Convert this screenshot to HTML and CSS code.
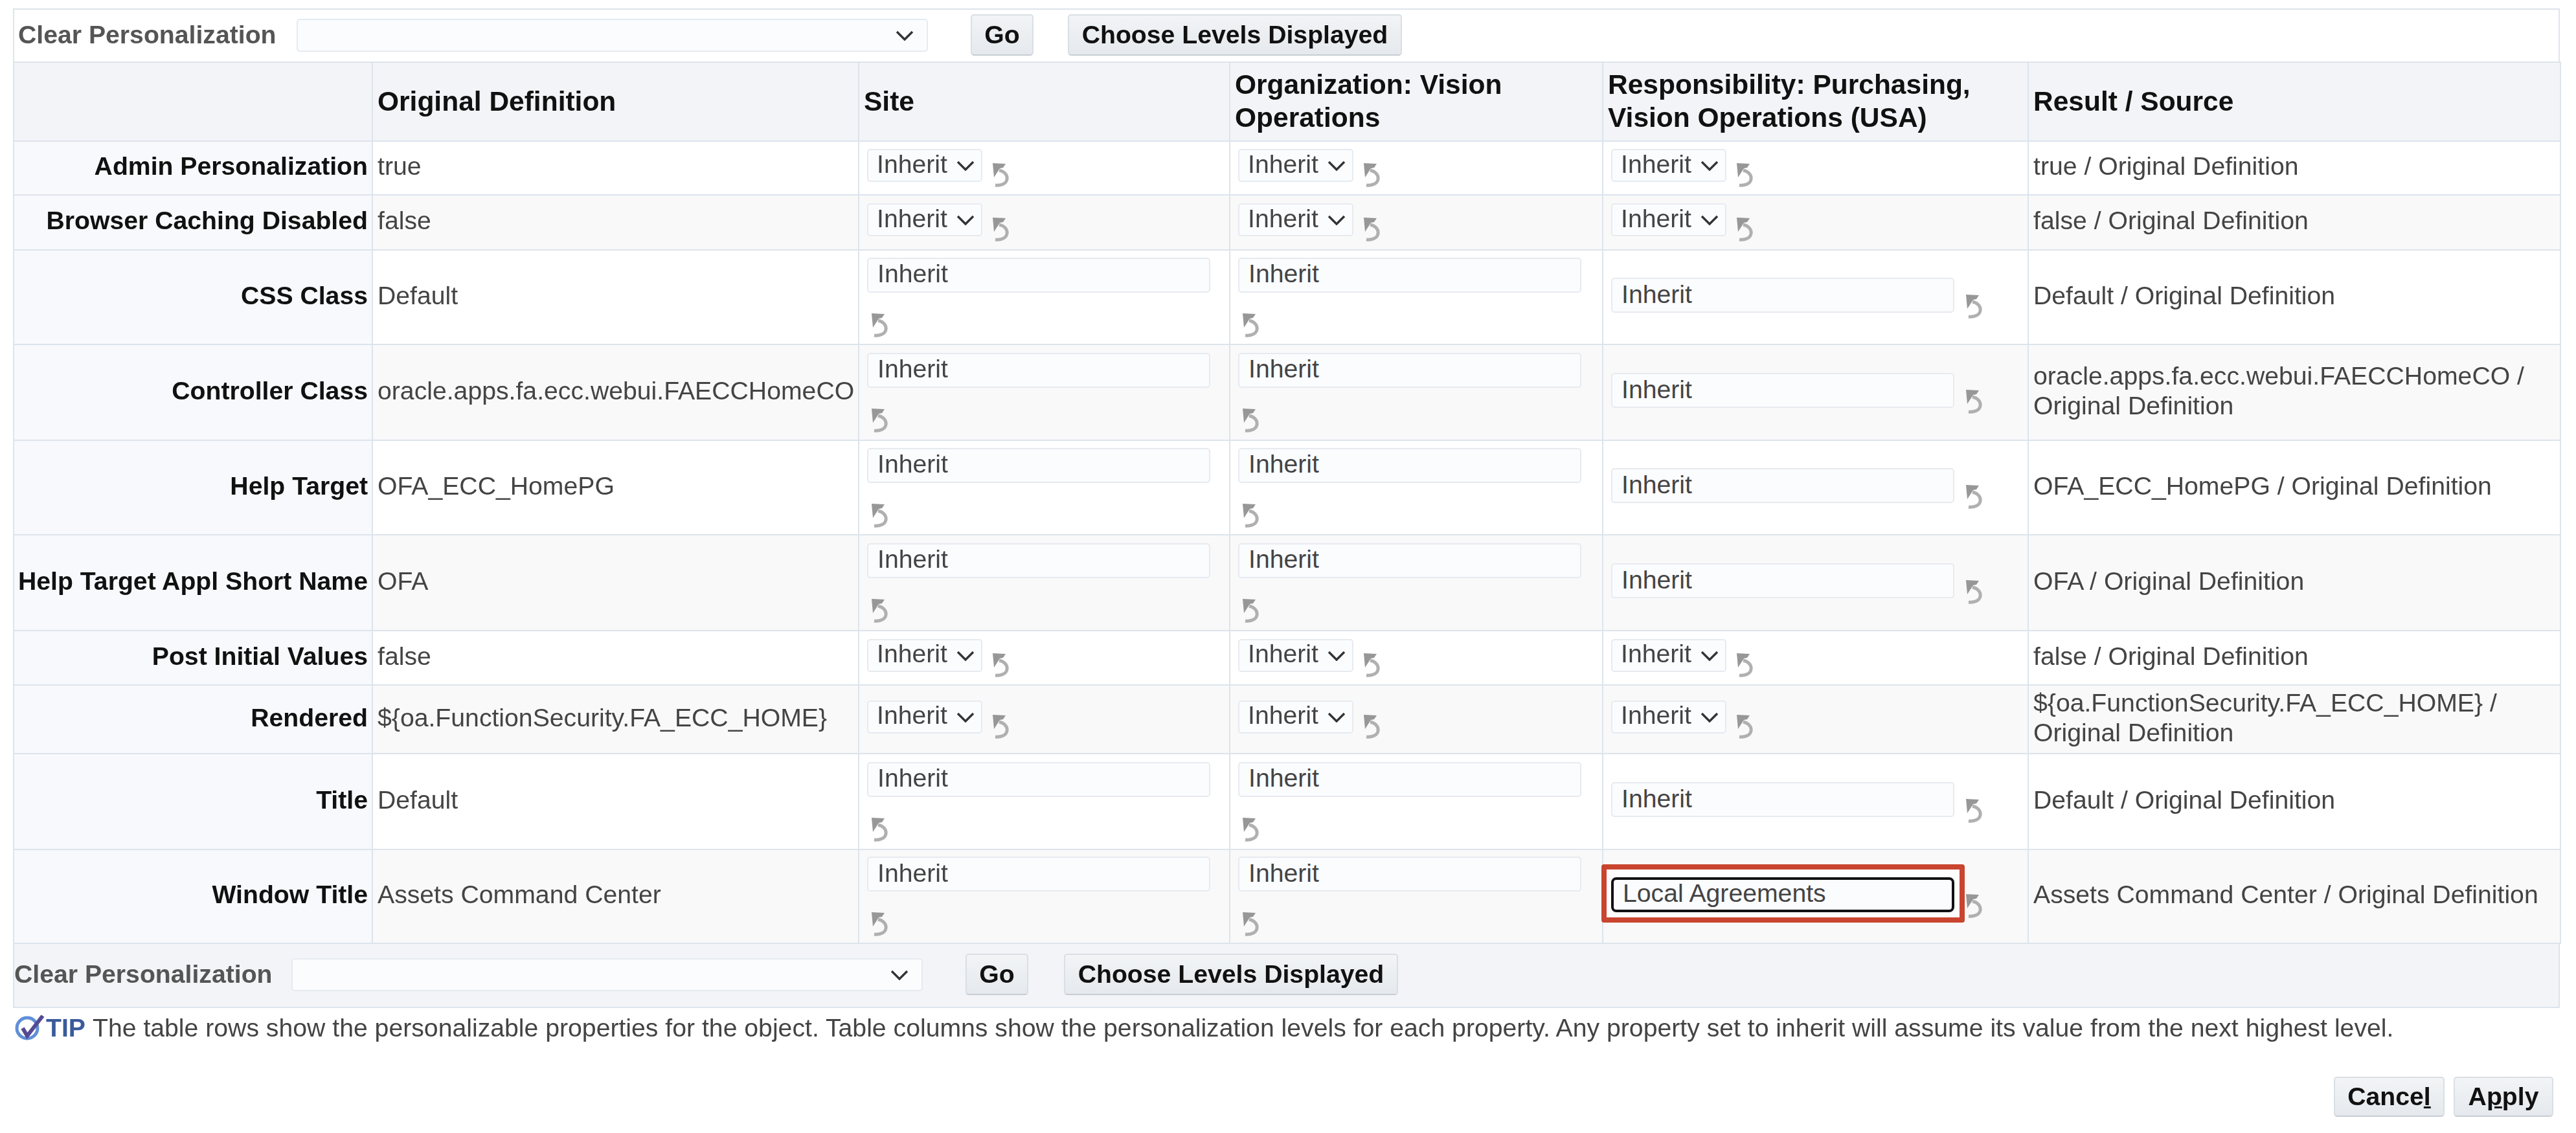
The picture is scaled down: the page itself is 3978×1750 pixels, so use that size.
FILE: index.html
```html
<!DOCTYPE html>
<html lang="en">
<head>
<meta charset="utf-8">
<title>Personalize Page</title>
<link rel="stylesheet" href="styles.css">
</head>
<body>
<svg class="defs" width="0" height="0" aria-hidden="true">
  <symbol id="undo" viewBox="0 0 25 38">
    <polygon points="0,1 20,2 16,8 11,9 2,23" fill="#979797"/>
    <path d="M10 12 C18 14 23 19 22 26 C21 33 12 36 4 35" fill="none" stroke="#b0b0b0" stroke-width="5"/>
  </symbol>
  <symbol id="chev" viewBox="0 0 28 16">
    <path d="M2 2 L14 14 L26 2" fill="none" stroke="#333" stroke-width="3.4"/>
  </symbol>
</svg>
<main class="page">
  <div class="toolbar toolbar-top">
    <span class="clear-label">Clear Personalization</span>
    <div class="select select-wide"><svg class="chev"><use href="#chev"/></svg></div>
    <button class="btn btn-go">Go</button>
    <button class="btn btn-choose">Choose Levels Displayed</button>
  </div>
  <table class="grid">
    <colgroup>
      <col class="c-label"><col class="c-orig"><col class="c-site"><col class="c-org"><col class="c-resp"><col class="c-result">
    </colgroup>
    <thead>
      <tr class="h-head">
        <th></th>
        <th>Original Definition</th>
        <th>Site</th>
        <th>Organization: Vision Operations</th>
        <th>Responsibility: Purchasing, Vision Operations (USA)</th>
        <th>Result / Source</th>
      </tr>
    </thead>
    <tbody>
      <tr class="h83">
        <td class="label">Admin Personalization</td><td>true</td>
        <td class="ctl"><div class="pick"><div class="select select-small">Inherit<svg class="chev"><use href="#chev"/></svg></div><svg class="undo"><use href="#undo"/></svg></div></td>
        <td class="ctl"><div class="pick"><div class="select select-small">Inherit<svg class="chev"><use href="#chev"/></svg></div><svg class="undo"><use href="#undo"/></svg></div></td>
        <td class="ctl"><div class="pick"><div class="select select-small">Inherit<svg class="chev"><use href="#chev"/></svg></div><svg class="undo"><use href="#undo"/></svg></div></td>
        <td>true / Original Definition</td>
      </tr>
      <tr class="h85 alt">
        <td class="label">Browser Caching Disabled</td><td>false</td>
        <td class="ctl"><div class="pick"><div class="select select-small">Inherit<svg class="chev"><use href="#chev"/></svg></div><svg class="undo"><use href="#undo"/></svg></div></td>
        <td class="ctl"><div class="pick"><div class="select select-small">Inherit<svg class="chev"><use href="#chev"/></svg></div><svg class="undo"><use href="#undo"/></svg></div></td>
        <td class="ctl"><div class="pick"><div class="select select-small">Inherit<svg class="chev"><use href="#chev"/></svg></div><svg class="undo"><use href="#undo"/></svg></div></td>
        <td>false / Original Definition</td>
      </tr>
      <tr class="h146">
        <td class="label">CSS Class</td><td>Default</td>
        <td class="ctl"><div class="stack"><div class="field">Inherit</div><svg class="undo"><use href="#undo"/></svg></div></td>
        <td class="ctl"><div class="stack"><div class="field">Inherit</div><svg class="undo"><use href="#undo"/></svg></div></td>
        <td class="ctl"><div class="inline"><div class="field">Inherit</div><svg class="undo"><use href="#undo"/></svg></div></td>
        <td>Default / Original Definition</td>
      </tr>
      <tr class="h148 alt">
        <td class="label">Controller Class</td><td>oracle.apps.fa.ecc.webui.FAECCHomeCO</td>
        <td class="ctl"><div class="stack"><div class="field">Inherit</div><svg class="undo"><use href="#undo"/></svg></div></td>
        <td class="ctl"><div class="stack"><div class="field">Inherit</div><svg class="undo"><use href="#undo"/></svg></div></td>
        <td class="ctl"><div class="inline"><div class="field">Inherit</div><svg class="undo"><use href="#undo"/></svg></div></td>
        <td>oracle.apps.fa.ecc.webui.FAECCHomeCO / Original Definition</td>
      </tr>
      <tr class="h146">
        <td class="label">Help Target</td><td>OFA_ECC_HomePG</td>
        <td class="ctl"><div class="stack"><div class="field">Inherit</div><svg class="undo"><use href="#undo"/></svg></div></td>
        <td class="ctl"><div class="stack"><div class="field">Inherit</div><svg class="undo"><use href="#undo"/></svg></div></td>
        <td class="ctl"><div class="inline"><div class="field">Inherit</div><svg class="undo"><use href="#undo"/></svg></div></td>
        <td>OFA_ECC_HomePG / Original Definition</td>
      </tr>
      <tr class="h148 alt">
        <td class="label">Help Target Appl Short Name</td><td>OFA</td>
        <td class="ctl"><div class="stack"><div class="field">Inherit</div><svg class="undo"><use href="#undo"/></svg></div></td>
        <td class="ctl"><div class="stack"><div class="field">Inherit</div><svg class="undo"><use href="#undo"/></svg></div></td>
        <td class="ctl"><div class="inline"><div class="field">Inherit</div><svg class="undo"><use href="#undo"/></svg></div></td>
        <td>OFA / Original Definition</td>
      </tr>
      <tr class="h84">
        <td class="label">Post Initial Values</td><td>false</td>
        <td class="ctl"><div class="pick"><div class="select select-small">Inherit<svg class="chev"><use href="#chev"/></svg></div><svg class="undo"><use href="#undo"/></svg></div></td>
        <td class="ctl"><div class="pick"><div class="select select-small">Inherit<svg class="chev"><use href="#chev"/></svg></div><svg class="undo"><use href="#undo"/></svg></div></td>
        <td class="ctl"><div class="pick"><div class="select select-small">Inherit<svg class="chev"><use href="#chev"/></svg></div><svg class="undo"><use href="#undo"/></svg></div></td>
        <td>false / Original Definition</td>
      </tr>
      <tr class="h106 alt">
        <td class="label">Rendered</td><td>${oa.FunctionSecurity.FA_ECC_HOME}</td>
        <td class="ctl"><div class="pick"><div class="select select-small">Inherit<svg class="chev"><use href="#chev"/></svg></div><svg class="undo"><use href="#undo"/></svg></div></td>
        <td class="ctl"><div class="pick"><div class="select select-small">Inherit<svg class="chev"><use href="#chev"/></svg></div><svg class="undo"><use href="#undo"/></svg></div></td>
        <td class="ctl"><div class="pick"><div class="select select-small">Inherit<svg class="chev"><use href="#chev"/></svg></div><svg class="undo"><use href="#undo"/></svg></div></td>
        <td>${oa.FunctionSecurity.FA_ECC_HOME} / Original Definition</td>
      </tr>
      <tr class="h148">
        <td class="label">Title</td><td>Default</td>
        <td class="ctl"><div class="stack"><div class="field">Inherit</div><svg class="undo"><use href="#undo"/></svg></div></td>
        <td class="ctl"><div class="stack"><div class="field">Inherit</div><svg class="undo"><use href="#undo"/></svg></div></td>
        <td class="ctl"><div class="inline"><div class="field">Inherit</div><svg class="undo"><use href="#undo"/></svg></div></td>
        <td>Default / Original Definition</td>
      </tr>
      <tr class="h145 alt">
        <td class="label">Window Title</td><td>Assets Command Center</td>
        <td class="ctl"><div class="stack"><div class="field">Inherit</div><svg class="undo"><use href="#undo"/></svg></div></td>
        <td class="ctl"><div class="stack"><div class="field">Inherit</div><svg class="undo"><use href="#undo"/></svg></div></td>
        <td class="ctl"><div class="inline"><div class="callout-wrap"><span class="callout"></span><div class="field field-focus">Local Agreements</div></div><svg class="undo"><use href="#undo"/></svg></div></td>
        <td>Assets Command Center / Original Definition</td>
      </tr>
    </tbody>
  </table>
  <div class="toolbar toolbar-bottom">
    <span class="clear-label">Clear Personalization</span>
    <div class="select select-wide"><svg class="chev"><use href="#chev"/></svg></div>
    <button class="btn btn-go">Go</button>
    <button class="btn btn-choose">Choose Levels Displayed</button>
  </div>
  <p class="tip">
    <svg class="tip-icon" viewBox="0 0 46 40" aria-hidden="true">
      <circle cx="19" cy="20" r="16" fill="none" stroke="#5f8fd8" stroke-width="5"/>
      <path d="M12 20 L19 32 L43 1" fill="none" stroke="#544a93" stroke-width="6"/>
    </svg>
    <b class="tip-word">TIP</b>
    <span>The table rows show the personalizable properties for the object. Table columns show the personalization levels for each property. Any property set to inherit will assume its value from the next highest level.</span>
  </p>
  <div class="actions">
    <button class="btn btn-cancel">Cance<u>l</u></button>
    <button class="btn btn-apply">A<u>p</u>ply</button>
  </div>
</main>
</body>
</html>
```
FILE: styles.css
```css
* { box-sizing: border-box; }
html, body { margin: 0; background: #fff; }
body {
  font-family: "Liberation Sans", Arial, sans-serif;
  font-size: 39.2px;
  line-height: 46px;
  color: #444;
}
.defs { position: absolute; }
.page { width: 3933px; margin-left: 20px; padding-top: 13px; filter: blur(0.7px); }

.toolbar { display: flex; align-items: center; }
.toolbar-top {
  height: 82px;
  padding-left: 6px;
  padding-bottom: 2px;
  border: 2px solid #dde4ec;
  border-bottom: 0;
}
.toolbar-bottom {
  height: 99px;
  padding-left: 0;
  padding-bottom: 3px;
  background: #f2f4f7;
  border: 2px solid #dde4ec;
  border-top: 0;
}
.clear-label { font-weight: 700; color: #555; white-space: nowrap; }
.toolbar-top .clear-label { width: 430px; }
.toolbar-bottom .clear-label { width: 428px; }

.select {
  position: relative;
  display: flex;
  align-items: center;
  height: 51px;
  padding-bottom: 4px;
  background: #fbfcfe;
  border: 2px solid #e6ebf0;
  border-radius: 5px;
}
.select-wide { width: 975px; }
.select-wide .chev { position: absolute; right: 20px; top: 16px; }
.select-small { width: 178px; padding-left: 13px; flex: none; }
.select-small .chev { position: absolute; right: 10px; top: 16px; }
.chev { width: 28px; height: 16px; }

.btn {
  height: 64px;
  padding: 0;
  font: 700 39.2px/46px "Liberation Sans", Arial, sans-serif;
  color: #111;
  background: linear-gradient(#f2f4f6, #e5e9ed);
  border: 2px solid #d9dfe5;
  border-bottom-color: #c6cdd4;
  border-radius: 5px;
}
.toolbar-top .btn-go { margin-left: 66px; }
.toolbar-bottom .btn-go { margin-left: 66px; }
.btn-go { width: 97px; }
.btn-choose { width: 516px; margin-left: 53px; }
.toolbar-bottom .btn-choose { margin-left: 55px; }

.grid {
  width: 3933px;
  table-layout: fixed;
  border-collapse: collapse;
}
.c-label { width: 554px; }
.c-orig { width: 751px; }
.c-site { width: 573px; }
.c-org { width: 576px; }
.c-resp { width: 657px; }
.c-result { width: 822px; }

.grid th, .grid td { border: 2px solid #dde4ec; padding: 0 7px; }
.grid th {
  font-size: 42.5px;
  line-height: 51px;
  font-weight: 700;
  text-align: left;
  color: #111;
  background: #f2f4f7;
  padding-bottom: 2px;
}
.grid td { vertical-align: middle; background: #fff; padding-bottom: 5px; }
.grid .alt td { background: #f9f9f9; }
.grid td.label {
  text-align: right;
  font-weight: 700;
  color: #111;
  background: #f7f9fc;
  white-space: nowrap;
  padding: 0 6px 5px 0;
}
.grid td.ctl { padding: 0 0 0 12px; }

.h-head { height: 122px; }
.h83 { height: 83px; }
.h84 { height: 84px; }
.h85 { height: 85px; }
.h106 { height: 106px; }
.h145 { height: 145px; }
.h146 { height: 146px; }
.h148 { height: 148px; }

.pick { display: flex; align-items: flex-start; gap: 16px; height: 59px; }
.pick .undo { margin-top: 21px; }
.stack { display: flex; flex-direction: column; align-items: flex-start; gap: 31px; }
.stack .undo { margin-left: 7px; }
.inline { display: flex; align-items: flex-start; gap: 18px; height: 60px; }
.inline .undo { margin-top: 25px; }
.undo { width: 25px; height: 38px; flex: none; }

.field {
  width: 530px;
  height: 54px;
  padding: 0 14px 3px;
  display: flex;
  align-items: center;
  background: #fbfcfe;
  border: 2px solid #e6ebf0;
  border-radius: 5px;
  flex: none;
}
.callout-wrap { position: relative; flex: none; }
.callout {
  position: absolute;
  inset: -20px -16px -16px -15px;
  background: #fdfdfe;
  border: 8px solid #c9452f;
  border-radius: 4px;
}
.field-focus {
  position: relative;
  border: 4px solid #111;
  border-radius: 8px;
  padding: 0 16px 3px 14px;
}

.tip {
  display: flex;
  align-items: center;
  margin: 8px 0 0;
  height: 46px;
  padding-left: 3px;
  white-space: nowrap;
}
.tip-icon { width: 46px; height: 40px; margin-right: 2px; flex: none; }
.tip-word { color: #3a5a9b; margin-right: 11px; }

.actions {
  display: flex;
  justify-content: flex-end;
  gap: 14px;
  margin-top: 52px;
  padding-right: 10px;
}
.btn-cancel { width: 171px; height: 62px; }
.btn-apply { width: 154px; height: 62px; }
```
